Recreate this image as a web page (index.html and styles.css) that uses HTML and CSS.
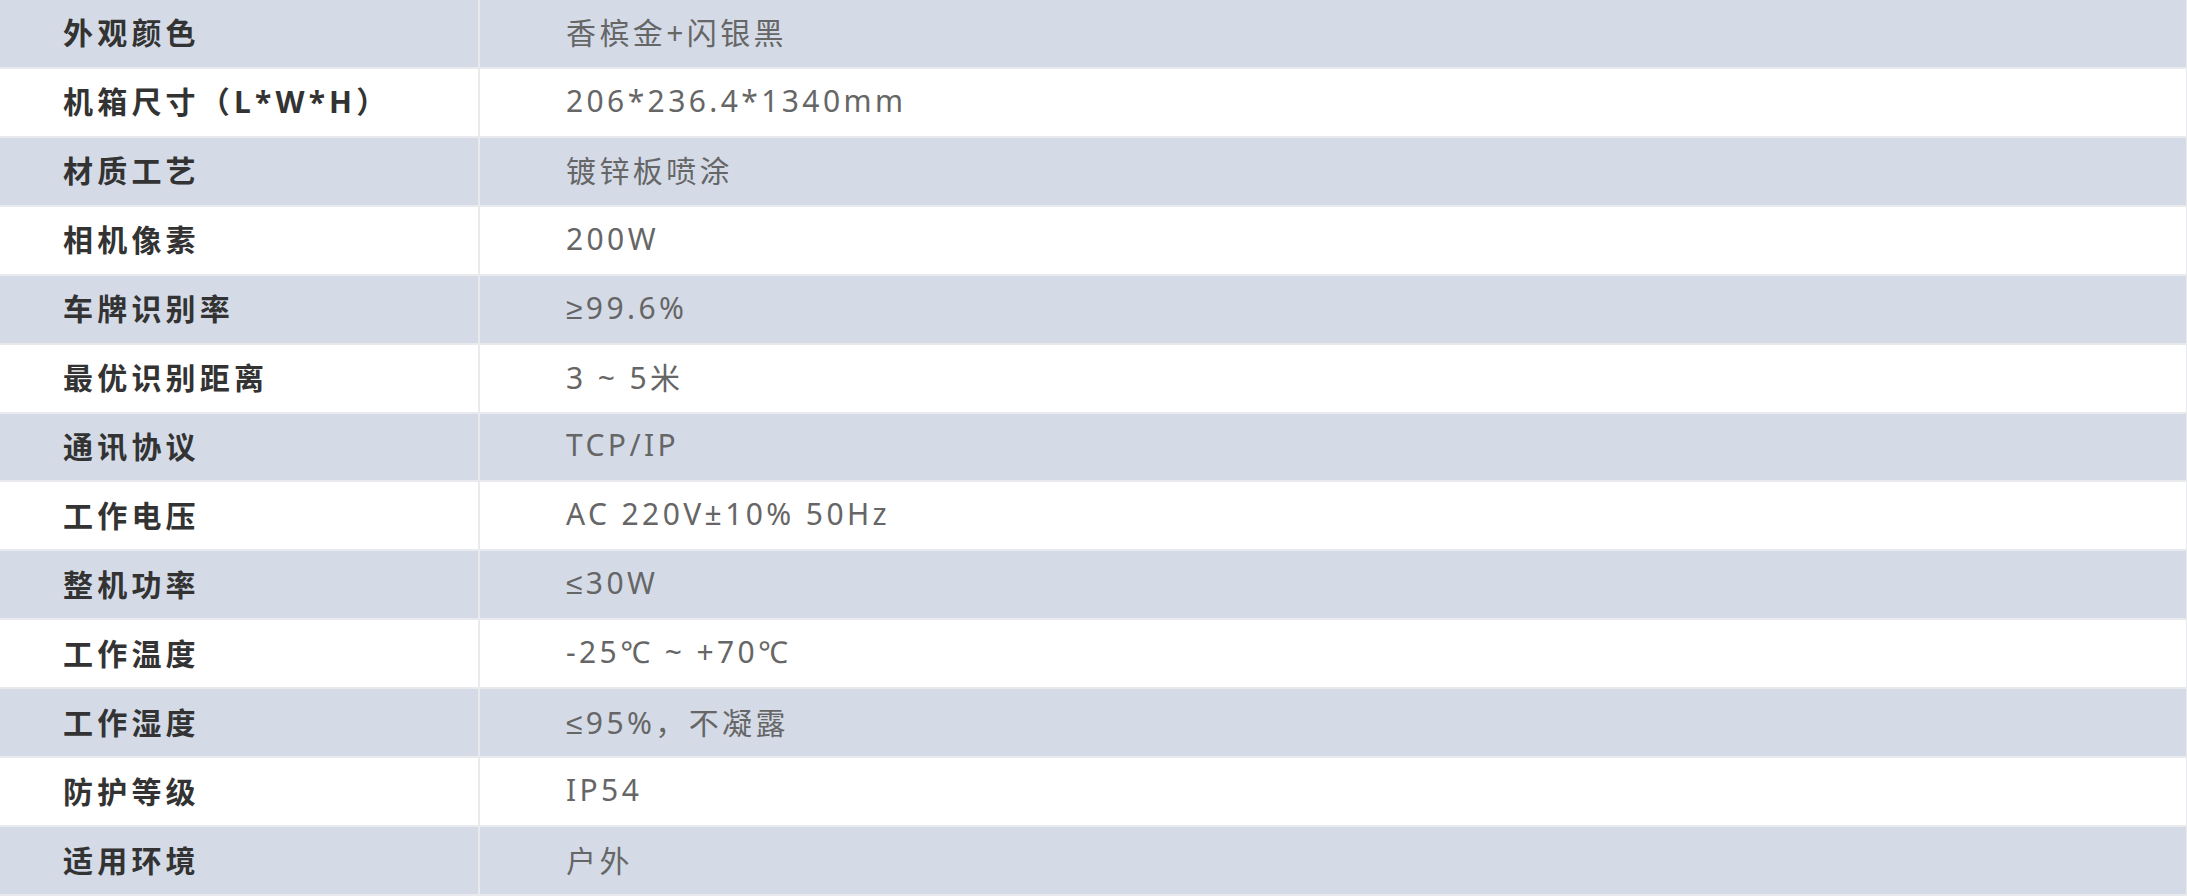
FILE: index.html
```html
<!DOCTYPE html>
<html lang="zh-CN">
<head>
<meta charset="utf-8">
<title>参数</title>
<link rel="stylesheet" href="styles.css">
</head>
<body>
<div class="spec">
  <div class="row alt"><div class="k">外观颜色</div><div class="v">香槟金+闪银黑</div></div>
  <div class="row"><div class="k">机箱尺寸（L*W*H）</div><div class="v">206*236.4*1340mm</div></div>
  <div class="row alt"><div class="k">材质工艺</div><div class="v">镀锌板喷涂</div></div>
  <div class="row"><div class="k">相机像素</div><div class="v">200W</div></div>
  <div class="row alt"><div class="k">车牌识别率</div><div class="v">≥99.6%</div></div>
  <div class="row"><div class="k">最优识别距离</div><div class="v">3 ~ 5米</div></div>
  <div class="row alt"><div class="k">通讯协议</div><div class="v">TCP/IP</div></div>
  <div class="row"><div class="k">工作电压</div><div class="v">AC 220V±10% 50Hz</div></div>
  <div class="row alt"><div class="k">整机功率</div><div class="v">≤30W</div></div>
  <div class="row"><div class="k">工作温度</div><div class="v">-25℃ ~ +70℃</div></div>
  <div class="row alt"><div class="k">工作湿度</div><div class="v">≤95%，不凝露</div></div>
  <div class="row"><div class="k">防护等级</div><div class="v">IP54</div></div>
  <div class="row alt"><div class="k">适用环境</div><div class="v">户外</div></div>
</div>
</body>
</html>
```

FILE: styles.css
```css
html, body {
  margin: 0;
  padding: 0;
  background: #ffffff;
}
.spec {
  width: 2187px;
  height: 896px;
  box-sizing: border-box;
  display: grid;
  grid-template-rows: repeat(13, 1fr);
  row-gap: 2px;
  padding: 0 1px 2px 0;
  background: #e8eaee;
  font-family: "Noto Sans", "Liberation Sans", "Noto Sans CJK SC", sans-serif;
}
.row {
  display: grid;
  grid-template-columns: 478px 1fr;
  column-gap: 2px;
}
.k, .v {
  display: flex;
  align-items: center;
  box-sizing: border-box;
  padding-bottom: 4px;
  background: #ffffff;
  font-size: 30px;
}
.row.alt .k, .row.alt .v {
  background: #d4dbe7;
}
.k {
  padding-left: 63px;
  color: #333333;
  font-weight: 700;
  letter-spacing: 4.2px;
}
.v {
  padding-left: 86px;
  color: #666666;
  font-weight: 400;
  letter-spacing: 3.4px;
}
```
